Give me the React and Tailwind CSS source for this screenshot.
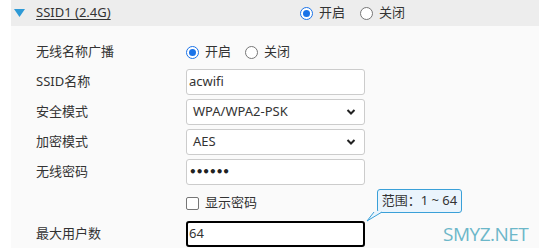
import { useState } from 'react';

const font = { fontFamily: '"Noto Sans", "Noto Sans CJK SC", sans-serif' };

const Radio = ({ checked, label }) => (
  <label className="flex items-center gap-[6px]">
    <span
      className={`w-[13px] h-[13px] rounded-full border flex items-center justify-center bg-white ${
        checked ? 'border-[#1a73e8]' : 'border-[#767676]'
      }`}
    >
      {checked && <span className="w-[7px] h-[7px] rounded-full bg-[#1a73e8]" />}
    </span>
    <span>{label}</span>
  </label>
);

const Chevron = () => (
  <svg className="absolute right-[8px] top-1/2 -translate-y-1/2" width="10" height="7" viewBox="0 0 10 7">
    <path d="M1.5 1.5 L5 5 L8.5 1.5" fill="none" stroke="#222" strokeWidth="2" />
  </svg>
);

const Row = ({ label, children, className = 'h-[26px]' }) => (
  <div className={`flex items-center ${className}`}>
    <div className="w-[150px] shrink-0">{label}</div>
    {children}
  </div>
);

const App = () => {
  const [count] = useState('64');

  return (
    <div className="w-[539px] h-[248px] bg-white pl-[11px] overflow-hidden text-[13px] text-[#333]" style={font}>
      <div className="h-full bg-[#fafafa] relative">
        {/* Заголовок */}
        <div className="h-[26px] bg-[#ededed] flex items-center">
          <svg className="ml-[3px]" width="11" height="8" viewBox="0 0 11 8">
            <path d="M0 0 H11 L5.5 8 Z" fill="#2e9ad6" />
          </svg>
          <span className="ml-[11px] underline underline-offset-2 w-[264px]">SSID1 (2.4G)</span>
          <div className="flex items-center gap-[15px]">
            <Radio checked label="开启" />
            <Radio label="关闭" />
          </div>
        </div>

        <div className="pl-[25px] pt-[13px] flex flex-col gap-[4px]">
          <Row label="无线名称广播">
            <div className="flex items-center gap-[14px]">
              <Radio checked label="开启" />
              <Radio label="关闭" />
            </div>
          </Row>
          <Row label="SSID名称">
            <div className="w-[179px] h-[26px] border border-[#ccc] rounded-[3px] bg-white flex items-center pl-[2px]">
              acwifi
            </div>
          </Row>
          <Row label="安全模式">
            <div className="relative w-[179px] h-[26px] border border-[#ccc] rounded-[3px] bg-white flex items-center pl-[6px]">
              WPA/WPA2-PSK
              <Chevron />
            </div>
          </Row>
          <Row label="加密模式">
            <div className="relative w-[179px] h-[26px] border border-[#ccc] rounded-[3px] bg-white flex items-center pl-[6px]">
              AES
              <Chevron />
            </div>
          </Row>
          <Row label="无线密码">
            <div className="w-[179px] h-[26px] border border-[#ccc] rounded-[3px] bg-white flex items-center pl-[2px] text-[12px] tracking-[-1px] font-bold text-[#222]" style={{ fontFamily: '"DejaVu Sans", sans-serif' }}>
              ••••••
            </div>
          </Row>
          <Row label="" className="h-[28px]">
            <label className="flex items-center gap-[6px]">
              <span className="w-[13px] h-[13px] rounded-[2px] border border-[#767676] bg-white" />
              <span>显示密码</span>
            </label>
          </Row>
          <Row label="最大用户数">
            <div className="relative">
              <div className="w-[179px] h-[26px] border-2 border-black rounded-[3px] bg-white flex items-center pl-[1px]">
                {count}
              </div>
              {/* Подсказка */}
              <div className="absolute left-[191px] top-[-32px] w-[85px] h-[24px] bg-[#eaf4fc] border border-[#3aa0d8] rounded-[3px] flex items-center justify-center text-[#333] whitespace-nowrap">
                范围：1 ~ 64
              </div>
              <svg className="absolute left-[180px] top-[-10px]" width="20" height="12" viewBox="0 0 20 12">
                <path d="M8 1 L1 10 L16 1" fill="#eaf4fc" stroke="#3aa0d8" strokeWidth="1" />
                <path d="M8.5 0 L15 0" stroke="#eaf4fc" strokeWidth="2" />
              </svg>
            </div>
          </Row>
        </div>

        <div className="absolute left-[432px] top-[220px] text-[19px] text-[#6cb7c9] tracking-[-0.5px]" style={{ fontFamily: '"Open Sans", sans-serif' }}>
          SMYZ.NET
        </div>
      </div>
    </div>
  );
};

export default App;
